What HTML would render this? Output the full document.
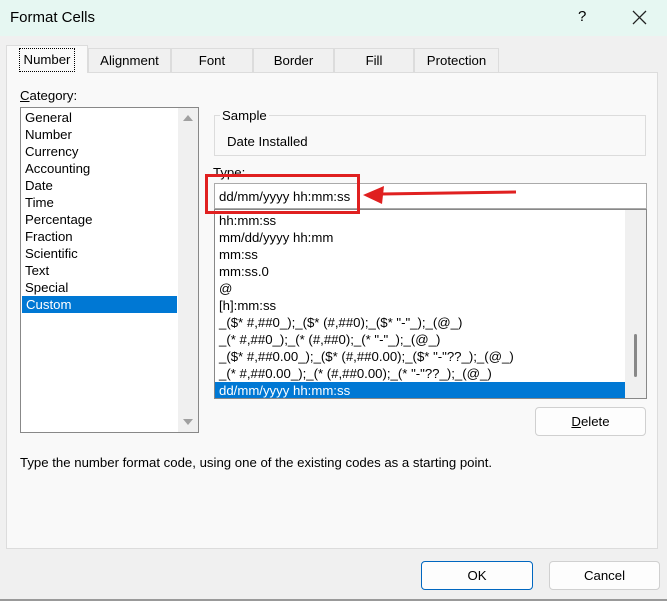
<!DOCTYPE html>
<html><head><style>
*{box-sizing:border-box;margin:0;padding:0}
body{width:667px;height:601px;background:#f0f0f0;font-family:"Liberation Sans",sans-serif;font-size:13.2px;color:#000;position:relative;overflow:hidden}
.a{position:absolute}
.tb{left:0;top:0;width:667px;height:36px;background:#e6f7f2}
.tab{position:absolute;top:48px;height:24px;border:1px solid #dcdcdc;border-bottom:none;background:#f0f0f0;text-align:center;line-height:24px}
.panel{left:6px;top:72px;width:652px;height:477px;background:#f9f9f9;border:1px solid #dcdcdc}
.li{position:absolute;left:0;height:17px;line-height:17px;padding-left:4px;white-space:nowrap}
.btn{position:absolute;background:#fdfdfd;border:1px solid #d0d0d0;border-radius:4px;text-align:center;line-height:27px}
</style></head><body>
<div class="a tb"></div>
<div class="a" style="left:10px;top:9px;font-size:15px">Format Cells</div>
<div class="a" style="left:578px;top:8px;font-size:15px">?</div>
<svg class="a" style="left:632px;top:10px" width="15" height="15"><path d="M1 1L14 14M14 1L1 14" stroke="#222" stroke-width="1.3"/></svg>
<div class="a panel"></div>
<div class="tab" style="left:6px;top:45px;height:28px;width:82px;background:#f9f9f9;border-bottom:none;z-index:2"><span style="border:1px dotted #000;padding:1px 4px;line-height:20px;display:inline-block;margin-top:2px">Number</span></div>
<div class="tab" style="left:88px;width:83px">Alignment</div>
<div class="tab" style="left:171px;width:82px">Font</div>
<div class="tab" style="left:253px;width:81px">Border</div>
<div class="tab" style="left:334px;width:80px">Fill</div>
<div class="tab" style="left:414px;width:85px">Protection</div>
<div class="a" style="left:20px;top:88px"><u>C</u>ategory:</div>
<div class="a" style="left:20px;top:107px;width:179px;height:326px;background:#fff;border:1px solid #888">
 <div class="a" style="left:157px;top:0;width:20px;height:324px;background:#f0f0f0"></div>
 <svg class="a" style="left:161px;top:6px" width="12" height="8"><path d="M1 7L6 1L11 7Z" fill="#a0a0a0"/></svg>
 <svg class="a" style="left:161px;top:310px" width="12" height="8"><path d="M1 1L6 7L11 1Z" fill="#a0a0a0"/></svg>
 <div class="li" style="top:1px">General</div>
 <div class="li" style="top:18px">Number</div>
 <div class="li" style="top:35px">Currency</div>
 <div class="li" style="top:52px">Accounting</div>
 <div class="li" style="top:69px">Date</div>
 <div class="li" style="top:86px">Time</div>
 <div class="li" style="top:103px">Percentage</div>
 <div class="li" style="top:120px">Fraction</div>
 <div class="li" style="top:137px">Scientific</div>
 <div class="li" style="top:154px">Text</div>
 <div class="li" style="top:171px">Special</div>
 <div class="li" style="top:188px;left:1px;width:155px;background:#0078d4;color:#fff">Custom</div>
</div>
<div class="a" style="left:214px;top:115px;width:432px;height:41px;border:1px solid #dcdcdc"></div>
<div class="a" style="left:220px;top:108px;background:#f9f9f9;padding:0 2px">Sample</div>
<div class="a" style="left:227px;top:134px">Date Installed</div>
<div class="a" style="left:213px;top:165px">Type:</div>
<div class="a" style="left:214px;top:183px;width:433px;height:26px;background:#fff;border:1px solid #aaa"></div>
<div class="a" style="left:219px;top:189px">dd/mm/yyyy hh:mm:ss</div>
<div class="a" style="left:214px;top:209px;width:433px;height:190px;background:#fff;border:1px solid #888;overflow:hidden">
 <div class="a" style="left:410px;top:0;width:21px;height:188px;background:#f0f0f0"></div>
 <div class="a" style="left:419px;top:124px;width:3px;height:43px;background:#888;border-radius:2px"></div>
 <div class="li" style="top:2px">hh:mm:ss</div>
 <div class="li" style="top:19px">mm/dd/yyyy hh:mm</div>
 <div class="li" style="top:36px">mm:ss</div>
 <div class="li" style="top:53px">mm:ss.0</div>
 <div class="li" style="top:70px">@</div>
 <div class="li" style="top:87px">[h]:mm:ss</div>
 <div class="li" style="top:104px">_($* #,##0_);_($* (#,##0);_($* "-"_);_(@_)</div>
 <div class="li" style="top:121px">_(* #,##0_);_(* (#,##0);_(* "-"_);_(@_)</div>
 <div class="li" style="top:138px">_($* #,##0.00_);_($* (#,##0.00);_($* "-"??_);_(@_)</div>
 <div class="li" style="top:155px">_(* #,##0.00_);_(* (#,##0.00);_(* "-"??_);_(@_)</div>
 <div class="li" style="top:172px;width:410px;background:#0078d4;color:#fff">dd/mm/yyyy hh:mm:ss</div>
</div>
<div class="a" style="left:205px;top:174px;width:155px;height:40px;border:3px solid #e02020"></div>
<svg class="a" style="left:360px;top:184px" width="160" height="22"><path d="M20 10L156 8" stroke="#e02020" stroke-width="3"/><path d="M3 11L24 2L22 20Z" fill="#e02020"/></svg>
<div class="btn" style="left:535px;top:407px;width:111px;height:29px"><u>D</u>elete</div>
<div class="a" style="left:20px;top:455px">Type the number format code, using one of the existing codes as a starting point.</div>
<div class="btn" style="left:421px;top:561px;width:112px;height:29px;border-color:#0067c0">OK</div>
<div class="btn" style="left:549px;top:561px;width:111px;height:29px">Cancel</div>
<div class="a" style="left:0;top:599px;width:667px;height:2px;background:#999"></div>
</body></html>
